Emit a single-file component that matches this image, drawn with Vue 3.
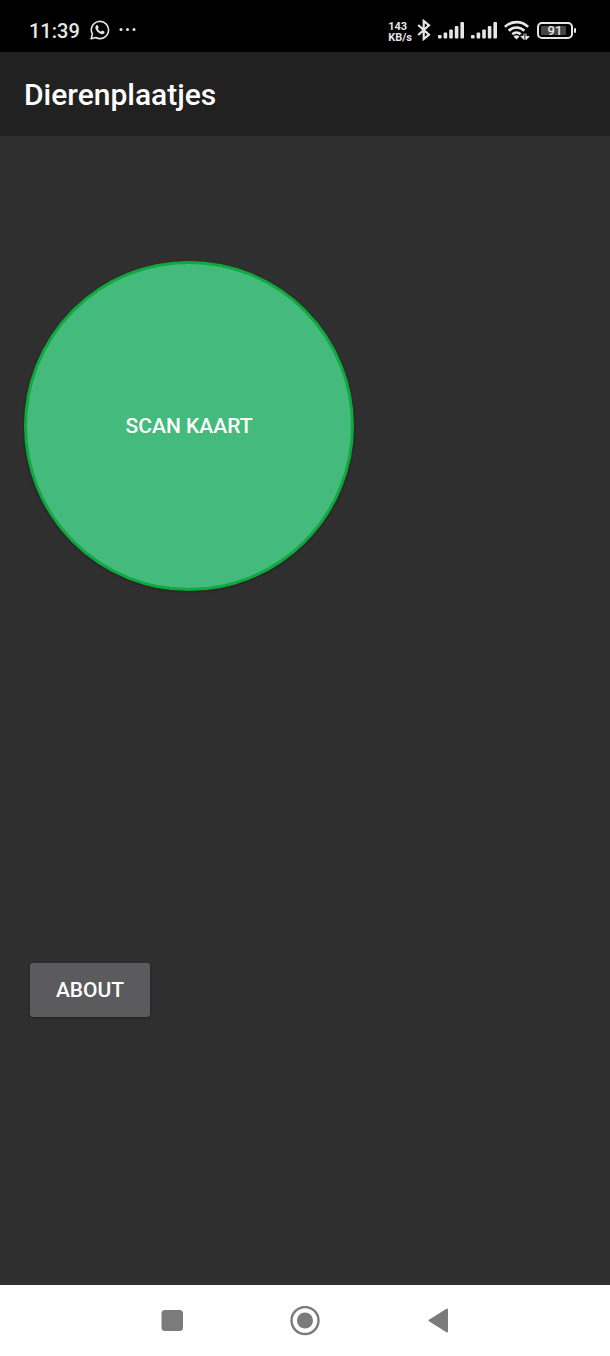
<script setup>
const signals = [1, 2]
</script>

<template>
  <div class="screen">
    <header class="status">
      <div class="status-left">
        <time class="clock">11:39</time>
        <svg class="whatsapp" width="20" height="20" viewBox="0 0 20 20" role="img" aria-label="WhatsApp">
          <path d="M1.2 18.8 2.4 14.1A8.6 8.6 0 1 1 5.8 17.5Z" fill="none" stroke="currentColor" stroke-width="1.6" stroke-linejoin="round" />
          <path d="M6.3 5.4c.4-.4 1.2-.5 1.5.1l.8 1.8c.2.5-.5 1.1-.8 1.5.7 1.3 1.8 2.3 3.2 2.9.4-.4.9-1.3 1.4-1.1l1.8.9c.6.3.4 1.2 0 1.7-1.1 1.3-2.8 1.1-4.2.4a9.7 9.7 0 0 1-4.3-4.3c-.5-1.3-.5-2.9.6-3.9Z" fill="currentColor" />
        </svg>
        <svg width="18" height="20" viewBox="0 0 18 20" fill="currentColor" aria-hidden="true">
          <circle cx="2" cy="9.500" r="1.500" />
          <circle cx="8.500" cy="9.500" r="1.500" />
          <circle cx="15" cy="9.500" r="1.500" />
        </svg>
      </div>
      <div class="status-right">
        <div class="speed"><span>143</span><span>KB/s</span></div>
        <svg width="14" height="22" viewBox="0 0 14 22" role="img" aria-label="Bluetooth">
          <path d="M1.2 6 12 15.700 6.700 20V2L12 6.300 1.200 16" fill="none" stroke="currentColor" stroke-width="2.200" />
        </svg>
        <svg v-for="s in signals" :key="s" class="signal" width="26" height="18" viewBox="0 0 26 18" fill="currentColor" role="img" aria-label="Signal">
          <rect x="0" y="14" width="3.600" height="3.500" rx="1" />
          <rect x="5.600" y="11.500" width="3.600" height="6" rx="1" />
          <rect x="11.200" y="8.500" width="3.600" height="9" rx="1" />
          <rect x="16.800" y="5" width="3.600" height="12.500" rx="1" />
          <rect x="22.400" y="1" width="3.600" height="16.500" rx="1" />
        </svg>
        <svg class="wifi" width="26" height="20" viewBox="0 0 26 20" role="img" aria-label="Wi-Fi">
          <g fill="none" stroke="currentColor" stroke-width="2.600">
            <path d="M.9 6.900a16.500 16.500 0 0 1 23.200 0" />
            <path d="M4.700 10.700a11.200 11.200 0 0 1 15.600 0" />
            <path d="M8.300 14.200a6.200 6.200 0 0 1 8.400 0" />
          </g>
          <path d="M12.500 19.600 9.500 16.500a4.200 4.200 0 0 1 6 0Z" fill="currentColor" />
          <path d="M20 13.500v6l-3.200-3.200H20M22 19.500v-6M22 16.500h3.200L22 19.500Z" fill="currentColor" stroke="currentColor" />
        </svg>
        <div class="battery"><span>91</span></div>
      </div>
    </header>

    <div class="toolbar"><h1>Dierenplaatjes</h1></div>

    <main class="content">
      <button type="button" class="scan">SCAN KAART</button>
      <button type="button" class="about">ABOUT</button>
    </main>

    <nav class="nav" aria-label="System">
      <button type="button" aria-label="Recent apps">
        <svg width="30" height="30" viewBox="0 0 30 30"><rect x="4.500" y="4" width="21.500" height="21" rx="3.500" fill="currentColor" /></svg>
      </button>
      <button type="button" aria-label="Home">
        <svg width="30" height="30" viewBox="0 0 30 30">
          <circle cx="15" cy="14.500" r="13.500" fill="none" stroke="currentColor" stroke-width="2.400" />
          <circle cx="15" cy="14.500" r="8" fill="currentColor" />
        </svg>
      </button>
      <button type="button" aria-label="Back">
        <svg width="30" height="30" viewBox="0 0 30 30"><path d="M6.500 14.500 24 3.500v22Z" fill="currentColor" stroke="currentColor" stroke-width="2" stroke-linejoin="round" /></svg>
      </button>
    </nav>
  </div>
</template>

<style>
body {
  background: #2f2f2f;
}
</style>

<style scoped>
.screen {
  display: flex;
  flex-direction: column;
  min-height: 100vh;
  background: #2f2f2f;
  color: #fff;
  font-family: Roboto, "Liberation Sans", sans-serif;
}
svg {
  display: block;
  flex: none;
}
button {
  padding: 0;
  border: 0;
  font-family: inherit;
  cursor: pointer;
}
.status {
  display: flex;
  align-items: center;
  justify-content: space-between;
  box-sizing: border-box;
  height: 52px;
  padding: 8px 34px 0 29px;
  background: #000;
  color: #e6e6e6;
}
.status-left,
.status-right {
  display: flex;
  align-items: center;
}
.clock {
  padding-top: 2px;
  font-size: 20px;
  line-height: 24px;
  font-weight: 500;
}
.whatsapp {
  margin: 0 9px 0 10px;
}
.speed {
  display: flex;
  flex-direction: column;
  margin-right: 5px;
  padding-top: 3px;
  font-size: 11px;
  line-height: 11px;
  font-weight: 700;
}
.signal {
  margin-left: 7px;
}
.wifi {
  margin: 0 7px;
}
.battery {
  position: relative;
  display: flex;
  box-sizing: border-box;
  width: 36px;
  height: 17px;
  margin-right: 3px;
  padding: 2px;
  border: 2px solid #e6e6e6;
  border-radius: 5px;
}
.battery span {
  flex: 1;
  border-radius: 1px;
  background: linear-gradient(90deg, #444 90%, #000 90%);
  font-size: 13px;
  line-height: 10px;
  font-weight: 500;
  text-align: center;
}
.battery::after {
  content: "";
  position: absolute;
  top: 4px;
  right: -5px;
  width: 2px;
  height: 5px;
  border-radius: 1px;
  background: #e6e6e6;
}
.toolbar {
  display: flex;
  align-items: center;
  height: 84px;
  padding: 0 24px;
  background: #212121;
}
h1 {
  margin: 0;
  padding-top: 2px;
  font-size: 30px;
  line-height: 36px;
  font-weight: 500;
}
.content {
  flex: 1;
  display: flex;
  flex-direction: column;
  align-items: flex-start;
  padding: 125px 24px 268px;
}
.scan,
.about {
  color: #fff;
  font-size: 21px;
  line-height: 24px;
  font-weight: 500;
}
.scan {
  width: 330px;
  height: 330px;
  border: 3px solid #0fa940;
  border-radius: 50%;
  background: #44bb7c;
  box-shadow: 0 1px 3px rgba(0, 0, 0, 0.3);
}
.about {
  width: 120px;
  height: 54px;
  margin: 372px 6px 0;
  border-radius: 3px;
  background: #5b5b5d;
  box-shadow: 0 1px 3px rgba(0, 0, 0, 0.35);
}
.nav {
  display: flex;
  align-items: center;
  justify-content: center;
  gap: 103px;
  height: 71px;
  background: #fff;
}
.nav button {
  background: none;
  color: #7b7b7b;
}
</style>
